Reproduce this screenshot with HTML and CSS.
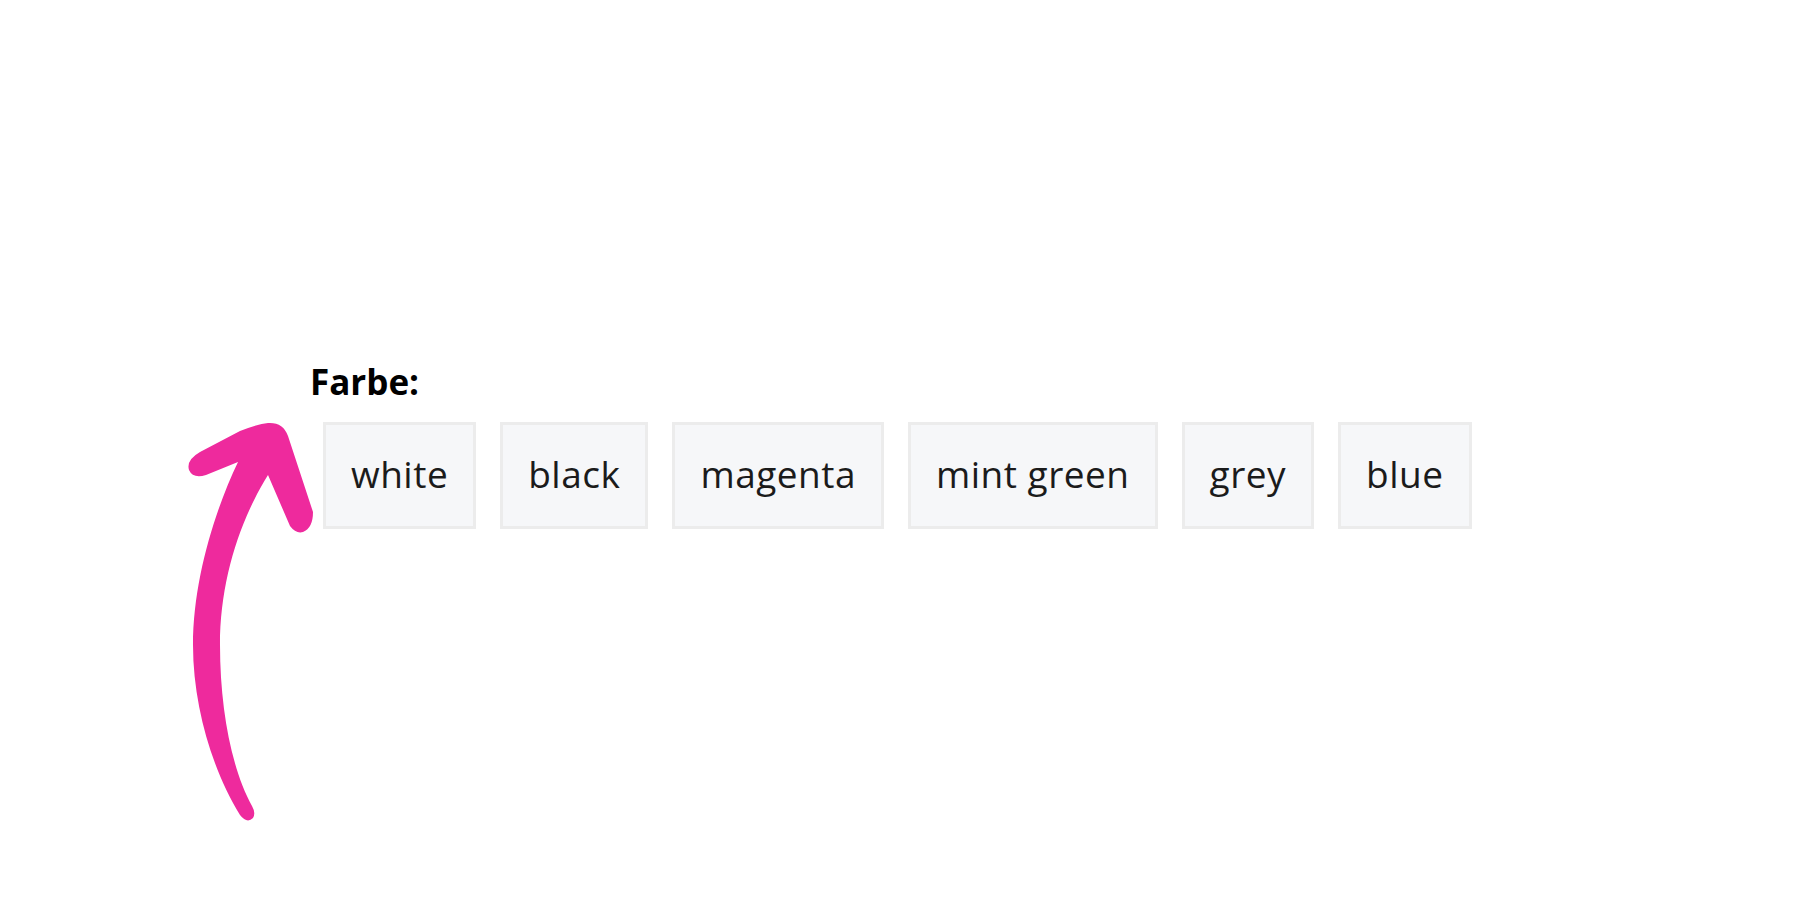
FILE: index.html
```html
<!DOCTYPE html>
<html lang="de">
<head>
<meta charset="utf-8">
<title>Farbe</title>
<link rel="stylesheet" href="styles.css">
</head>
<body>
<main class="page">
  <section class="field">
    <div class="field-label">Farbe:</div>
    <div class="swatches">
      <button class="swatch" type="button">white</button>
      <button class="swatch" type="button">black</button>
      <button class="swatch" type="button">magenta</button>
      <button class="swatch" type="button">mint green</button>
      <button class="swatch" type="button">grey</button>
      <button class="swatch" type="button">blue</button>
    </div>
  </section>
  <svg class="arrow" viewBox="0 0 1800 900" width="1800" height="900" aria-hidden="true">
    <path fill="#ee2a9d" d="M 238 462 C 215 510 193 580 193 645 C 193 710 215 775 240 815 Q 247 824 253 818 Q 256 813 252 806 C 232 770 220 710 220 645 C 220 580 240 520 268 475 L 290 526 Q 296 534 303 532 Q 313 528 313 512 L 288 436 Q 283 422 268 423 Q 258 424 240 431 L 200 452 Q 186 460 189 470 Q 193 479 206 475 Z"/>
  </svg>
</main>
</body>
</html>
```

FILE: styles.css
```css
html, body {
  margin: 0;
  padding: 0;
  background: #ffffff;
}

.page {
  position: relative;
  width: 1800px;
  height: 900px;
  overflow: hidden;
}

.field {
  padding: 358px 0 0 310px;
  font-family: "Open Sans", "Liberation Sans", sans-serif;
}

.field-label {
  font-size: 35px;
  font-weight: 700;
  color: #000000;
  line-height: 47px;
  margin-bottom: 17px;
}

.swatches {
  display: flex;
  gap: 24px;
  margin-left: 13px;
}

.swatch {
  font-family: "Open Sans", "Liberation Sans", sans-serif;
  font-size: 37px;
  font-weight: 400;
  letter-spacing: 0.5px;
  line-height: 50px;
  color: #1b1b1b;
  background: #f6f7f9;
  border: 3px solid #ececec;
  border-radius: 0;
  padding: 24px 25px 27px;
  margin: 0;
  cursor: pointer;
}

.arrow {
  position: absolute;
  left: 0;
  top: 0;
  pointer-events: none;
}
```
